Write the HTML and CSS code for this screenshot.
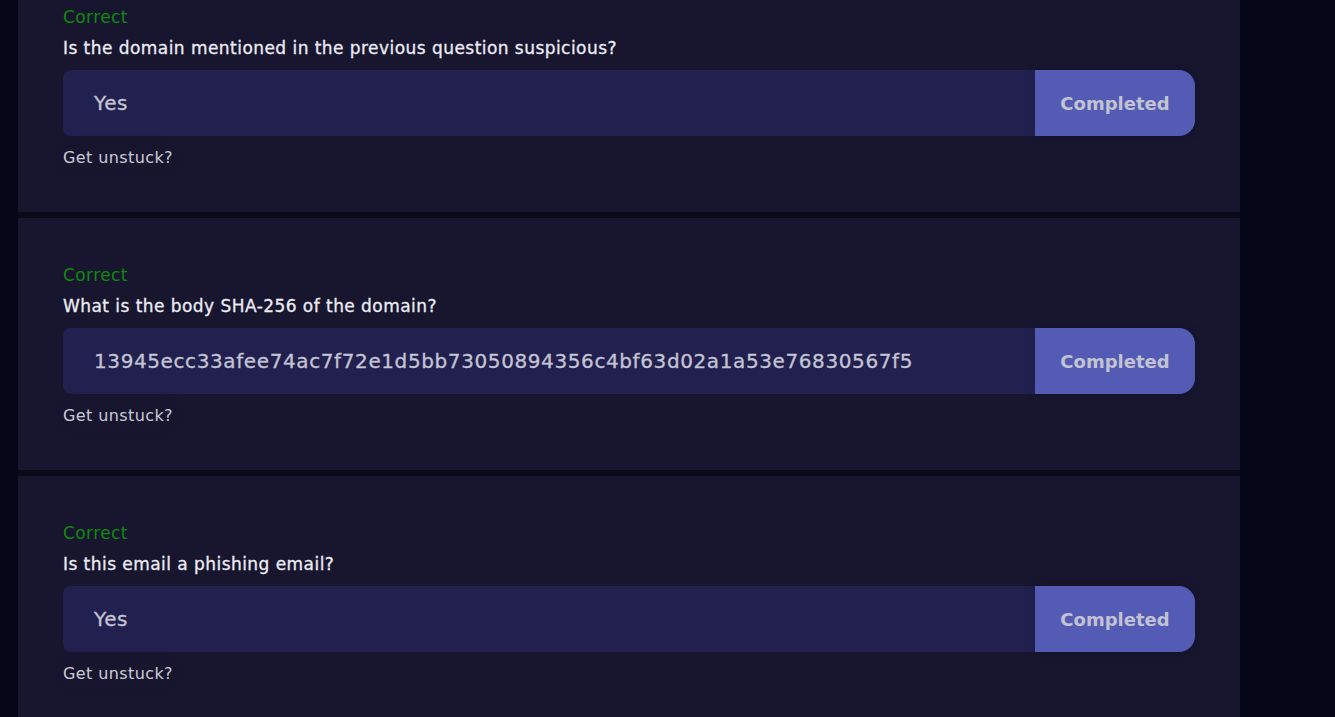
FILE: index.html
```html
<!DOCTYPE html>
<html lang="en">
<head>
<meta charset="utf-8">
<title>Questions</title>
<link rel="stylesheet" href="styles.css">
</head>
<body>
<main class="page">
  <section class="list">
    <article class="card">
      <div class="status">Correct</div>
      <div class="question">Is the domain mentioned in the previous question suspicious?</div>
      <div class="answer-row">
        <div class="answer">Yes</div>
        <button class="done">Completed</button>
      </div>
      <div class="hint">Get unstuck?</div>
    </article>
    <article class="card">
      <div class="status">Correct</div>
      <div class="question">What is the body SHA-256 of the domain?</div>
      <div class="answer-row">
        <div class="answer">13945ecc33afee74ac7f72e1d5bb73050894356c4bf63d02a1a53e76830567f5</div>
        <button class="done">Completed</button>
      </div>
      <div class="hint">Get unstuck?</div>
    </article>
    <article class="card">
      <div class="status">Correct</div>
      <div class="question">Is this email a phishing email?</div>
      <div class="answer-row">
        <div class="answer">Yes</div>
        <button class="done">Completed</button>
      </div>
      <div class="hint">Get unstuck?</div>
    </article>
  </section>
</main>
</body>
</html>
```
FILE: styles.css
```css
html, body {
  margin: 0;
  padding: 0;
  height: 100%;
  overflow: hidden;
}
body {
  background: #060619;
  font-family: "DejaVu Sans", "Open Sans", sans-serif;
}
.page {
  display: flex;
}
.list {
  width: 1222px;
  margin-left: 18px;
  margin-top: -40px;
  display: flex;
  flex-direction: column;
  gap: 6px;
  background: #0a0918;
}
.card {
  background: #18162f;
  height: 252px;
  box-sizing: border-box;
  padding: 47px 45px 0;
  display: flex;
  flex-direction: column;
}
.status {
  color: #0d8a0d;
  font-size: 17px;
  letter-spacing: 0.4px;
  line-height: 20px;
}
.question {
  margin-top: 11px;
  color: #ececf4;
  font-size: 17px;
  letter-spacing: 0.45px;
  line-height: 20px;
  -webkit-text-stroke: 0.3px #ececf4;
}
.answer-row {
  margin-top: 12px;
  display: flex;
  height: 66px;
}
.answer {
  flex: 1;
  background: #22204f;
  border-radius: 8px 0 0 8px;
  padding-left: 31px;
  display: flex;
  align-items: center;
  color: #c4c4d4;
  font-size: 20px;
  letter-spacing: 0.6px;
  -webkit-text-stroke: 0.3px #c4c4d4;
}
.done {
  width: 160px;
  border: none;
  background: #545bb5;
  border-radius: 0 16px 16px 0;
  color: #c2c2d2;
  font-family: inherit;
  font-size: 18px;
  font-weight: 700;
  box-shadow: 0 0 12px rgba(0, 0, 0, 0.18);
  padding: 0;
}
.hint {
  margin-top: 12px;
  align-self: flex-start;
  color: #cbcbd6;
  font-size: 16px;
  letter-spacing: 0.4px;
  line-height: 20px;
  box-shadow: 0 0 18px rgba(0, 0, 0, 0.08);
  border-radius: 16px;
}
```
